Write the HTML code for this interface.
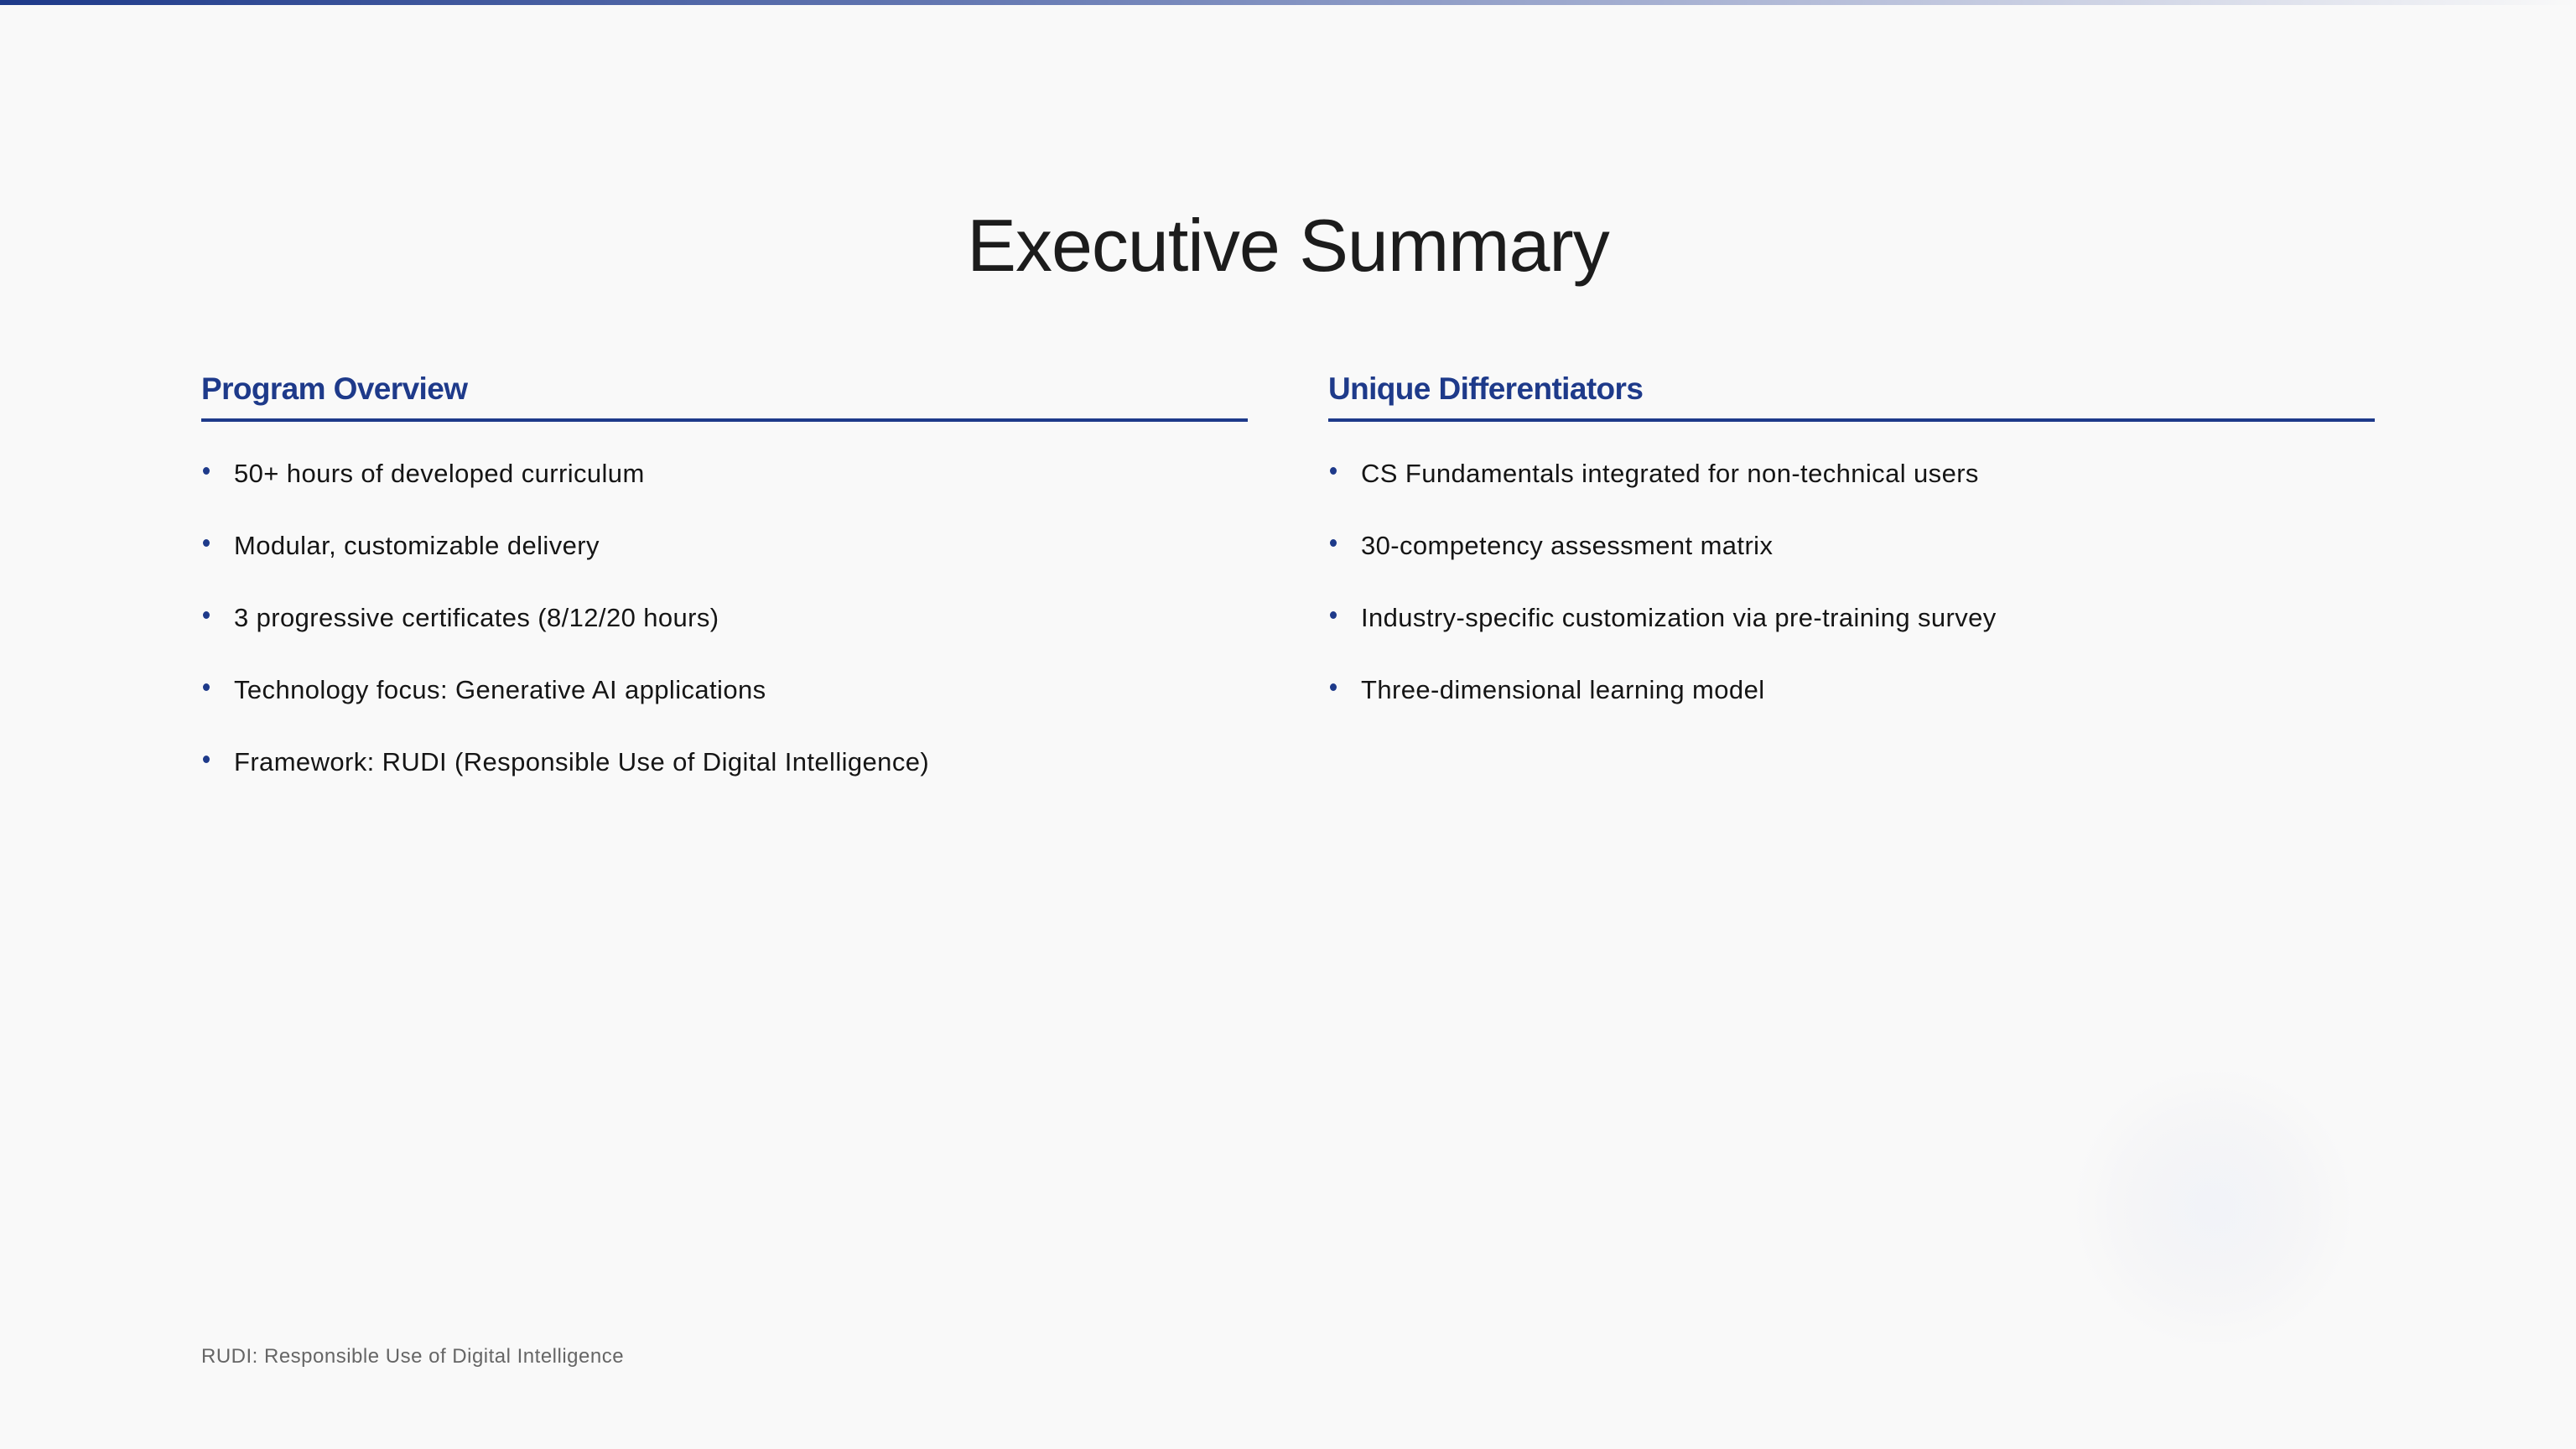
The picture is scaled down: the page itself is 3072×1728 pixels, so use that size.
<!DOCTYPE html>
<html><head><meta charset="utf-8"><style>
html,body{margin:0;padding:0}
body{width:3072px;height:1728px;background:#f9f9f9;position:relative;overflow:hidden;font-family:"Liberation Sans",sans-serif;color:#151515}
.bar{position:absolute;left:0;top:0;width:3072px;height:6px;background:linear-gradient(90deg,#1e3a8a 0%,#6a7db5 40%,#b4bcd8 70%,rgba(249,249,249,0) 100%)}
.blob{position:absolute;left:2470px;top:1270px;width:340px;height:340px;border-radius:50%;background:radial-gradient(circle,rgba(238,240,247,0.7) 0%,rgba(242,242,245,0.5) 45%,rgba(249,249,249,0) 70%)}
h1{position:absolute;left:0;width:3072px;top:238px;margin:0;text-align:center;font-weight:300;font-size:88px;line-height:110px;color:#1c1c1c;letter-spacing:-1px}
.col{position:absolute;top:439px;width:1248px}
.col h2{margin:0;font-size:37px;font-weight:bold;color:#1e3a8a;line-height:50px;height:60px;border-bottom:4px solid #1e3a8a;letter-spacing:-0.6px}
.col ul{list-style:none;margin:0;padding:0;margin-top:19px}
.col li{position:relative;font-size:31px;line-height:86px;height:86px;padding-left:39px;letter-spacing:0.4px}
.col li:before{content:"";position:absolute;left:2px;top:35px;width:8px;height:9px;border-radius:50%;background:#1e3a8a}
.foot{position:absolute;left:240px;top:1604px;font-size:24px;color:#666;letter-spacing:0.5px}
</style></head><body>
<div class="bar"></div>
<div class="blob"></div>
<h1>Executive Summary</h1>
<div class="col" style="left:240px">
<h2>Program Overview</h2>
<ul>
<li>50+ hours of developed curriculum</li>
<li>Modular, customizable delivery</li>
<li>3 progressive certificates (8/12/20 hours)</li>
<li>Technology focus: Generative AI applications</li>
<li>Framework: RUDI (Responsible Use of Digital Intelligence)</li>
</ul>
</div>
<div class="col" style="left:1584px">
<h2>Unique Differentiators</h2>
<ul>
<li>CS Fundamentals integrated for non-technical users</li>
<li>30-competency assessment matrix</li>
<li>Industry-specific customization via pre-training survey</li>
<li>Three-dimensional learning model</li>
</ul>
</div>
<div class="foot">RUDI: Responsible Use of Digital Intelligence</div>
</body></html>
